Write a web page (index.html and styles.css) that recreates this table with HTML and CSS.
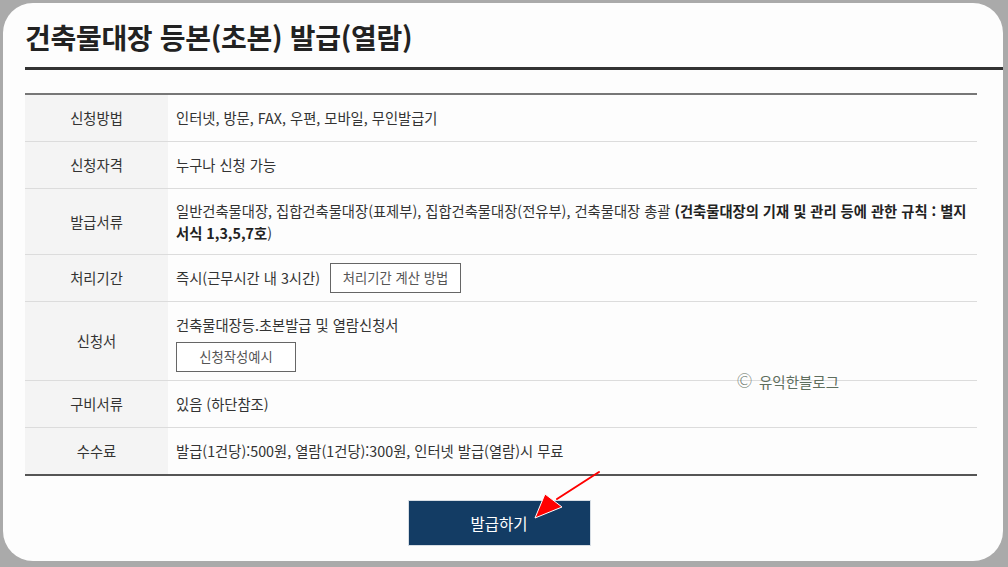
FILE: index.html
```html
<!DOCTYPE html>
<html lang="ko">
<head>
<meta charset="utf-8">
<title>건축물대장 등본(초본) 발급(열람)</title>
<link rel="stylesheet" href="styles.css">
</head>
<body>
<div class="panel">
  <h1 class="title">건축물대장 등본(초본) 발급(열람)</h1>
  <table class="info">
    <tr>
      <th>신청방법</th>
      <td>인터넷, 방문, FAX, 우편, 모바일, 무인발급기</td>
    </tr>
    <tr>
      <th>신청자격</th>
      <td>누구나 신청 가능</td>
    </tr>
    <tr class="tall">
      <th>발급서류</th>
      <td>일반건축물대장, 집합건축물대장(표제부), 집합건축물대장(전유부), 건축물대장 총괄 <b>(건축물대장의 기재 및 관리 등에 관한 규칙 : 별지 서식 1,3,5,7호</b>)</td>
    </tr>
    <tr>
      <th>처리기간</th>
      <td>즉시(근무시간 내 3시간) <span class="btn-line inline">처리기간 계산 방법</span></td>
    </tr>
    <tr class="form-row">
      <th>신청서</th>
      <td>건축물대장등.초본발급 및 열람신청서<span class="btn-line block">신청작성예시</span></td>
    </tr>
    <tr>
      <th>구비서류</th>
      <td>있음 (하단참조)</td>
    </tr>
    <tr class="last">
      <th>수수료</th>
      <td>발급(1건당):500원, 열람(1건당):300원, 인터넷 발급(열람)시 무료</td>
    </tr>
  </table>
  <div class="actions">
    <span class="submit">발급하기</span>
  </div>
  <span class="watermark"><span class="copy">©</span><span class="wm-text">유익한블로그</span></span>
  <svg class="arrow" width="80" height="60" viewBox="0 0 80 60">
    <line x1="72" y1="6" x2="30" y2="33" stroke="#ff0000" stroke-width="2" stroke-linecap="round"/>
    <polygon points="8,52 18,28 35,41" fill="#ff0000" stroke="#ffffff" stroke-width="1" stroke-linejoin="round"/>
  </svg>
</div>
</body>
</html>
```
FILE: styles.css
```css
html, body {
  margin: 0;
  padding: 0;
}
body {
  background: #aaaaaa;
  width: 1008px;
  height: 567px;
  overflow: hidden;
  font-family: "Noto Sans CJK KR", "Noto Sans", sans-serif;
  color: #333;
}
.panel {
  position: relative;
  margin: 3px 5px 0 3px;
  height: 558px;
  background: #fdfdfd;
  border-radius: 30px;
  box-sizing: border-box;
  padding-top: 17px;
}
.title {
  margin: 0 0 0 22px;
  padding: 0 0 13px 0;
  font-size: 28px;
  line-height: 34px;
  font-weight: 700;
  color: #222;
  letter-spacing: -0.3px;
  border-bottom: 3px solid #333;
}
.info {
  margin: 23px 26px 0 22px;
  width: 952px;
  border-collapse: collapse;
  border-top: 2px solid #777;
  font-size: 14.3px;
  line-height: 22px;
}
.info th {
  width: 143px;
  background: #f4f4f4;
  font-weight: 400;
  color: #333;
  text-align: center;
  padding: 12px 0;
  border-bottom: 1px solid #dcdcdc;
}
.info td {
  padding: 12px 8px;
  border-bottom: 1px solid #dcdcdc;
  color: #333;
}
.info tr.tall td {
  padding: 11px 8px 10px;
}
.info tr.tall th {
  padding: 11px 0 10px;
}
.info td b {
  font-weight: 700;
  color: #222;
}
.info tr.last th, .info tr.last td {
  border-bottom: 2px solid #555;
}
.btn-line {
  box-sizing: border-box;
  height: 30px;
  line-height: 28px;
  border: 1px solid #666;
  background: #fff;
  text-align: center;
  font-size: 13.3px;
  color: #555;
}
.btn-line.inline {
  display: inline-block;
  width: 131px;
  margin: -4px 0 -4px 6px;
  vertical-align: top;
}
.btn-line.block {
  display: block;
  width: 120px;
  margin: 6px 0 0 0;
}
.info tr.form-row td { padding-bottom: 8px; }
.actions {
  display: flex;
  justify-content: center;
  margin: 24px 26px 0 18px;
}
.submit {
  box-sizing: border-box;
  width: 183px;
  height: 46px;
  line-height: 44px;
  background: #133c64;
  border: 1px solid #d6dde4;
  color: #fff;
  font-size: 15.5px;
  text-align: center;
}
.watermark {
  position: absolute;
  left: 732px;
  top: 368px;
  font-size: 14.5px;
  line-height: 20px;
  color: #5e6e5e;
}
.watermark .copy {
  font-size: 19px;
  line-height: 20px;
  font-family: "DejaVu Sans", sans-serif;
  font-weight: 300;
}
.watermark .wm-text {
  margin-left: 5px;
}
.arrow {
  position: absolute;
  left: 524px;
  top: 463px;
}
```
